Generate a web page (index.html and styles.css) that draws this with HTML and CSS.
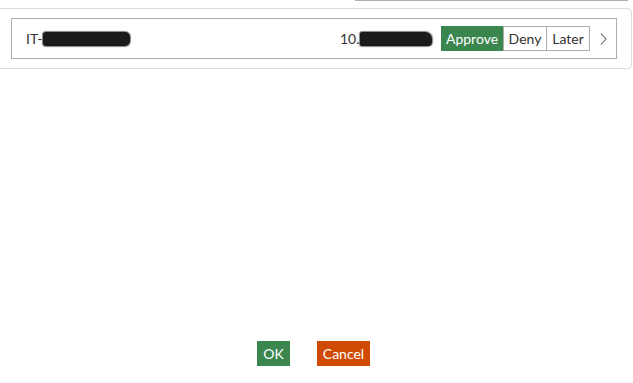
FILE: index.html
```html
<!DOCTYPE html>
<html lang="en">
<head>
	<meta charset="UTF-8">
	<title>Pending devices</title>
	<link rel="stylesheet" href="styles.css">
</head>
<body>
	<div class="topline"></div>
	<div class="panel">
		<div class="row">
			<div class="name">IT-<span class="mask mask-name"></span></div>
			<div class="ip">10.<span class="mask mask-ip"></span></div>
			<div class="actions">
				<button class="act approve">Approve</button>
				<button class="act deny">Deny</button>
				<button class="act later">Later</button>
			</div>
			<span class="more">
				<svg width="7" height="12" viewBox="0 0 7 12"><polyline points="1,0.5 6,6 1,11.5" fill="none" stroke="#666" stroke-width="1.1"/></svg>
			</span>
		</div>
	</div>
	<div class="footer">
		<button class="btn ok">OK</button>
		<button class="btn cancel">Cancel</button>
	</div>
</body>
</html>
```

FILE: styles.css
```css
body{margin: 0; font-family: Lato, "Open Sans", sans-serif; font-size: 14px; color: #333; background: #fff; overflow: hidden;}
button{font-family: inherit; font-size: 14px; margin: 0; cursor: pointer;}

.topline{height: 1px; width: 273px; margin-left: 355px; background: #a9b0a6;}

.panel{box-sizing: border-box; width: 636px; margin: 7px 0 0 -4px; padding: 9px 14px; border: 1px solid #dcdcdc; border-radius: 4px;}

.row{box-sizing: border-box; height: 41px; border: 1px solid #a9b0a6; display: flex; align-items: center; padding-left: 14px;}
.name{width: 314px; display: flex; align-items: center;}
.ip{width: 101px; display: flex; align-items: center;}
.mask{display: inline-block; height: 14px; background: #1b1b1b; box-shadow: 0 0 1px 1px rgba(30,30,30,0.55); margin-top: 1px;}
.mask-name{width: 87px; border-radius: 3px 5px 5px 3px;}
.mask-ip{width: 72px; border-radius: 2px 7px 4px 2px;}

.actions{display: flex; height: 25px;}
.act{box-sizing: border-box; height: 25px; padding: 0; background: #fff; color: #333; border: 1px solid #a9b0a6;}
.approve{width: 62px; background: #3b854f; border-color: #3b854f; color: #fff;}
.deny{width: 44px;}
.later{width: 43px; border-left: none;}
.more{display: flex; margin-left: 10px; margin-top: 1px;}

.footer{display: flex; justify-content: center; gap: 27px; margin-top: 272px; padding-right: 6px;}
.btn{box-sizing: border-box; height: 25px; border: none; color: #fff; padding: 0;}
.ok{width: 33px; background: #3b854f;}
.cancel{width: 53px; background: #cf4a02;}
```
